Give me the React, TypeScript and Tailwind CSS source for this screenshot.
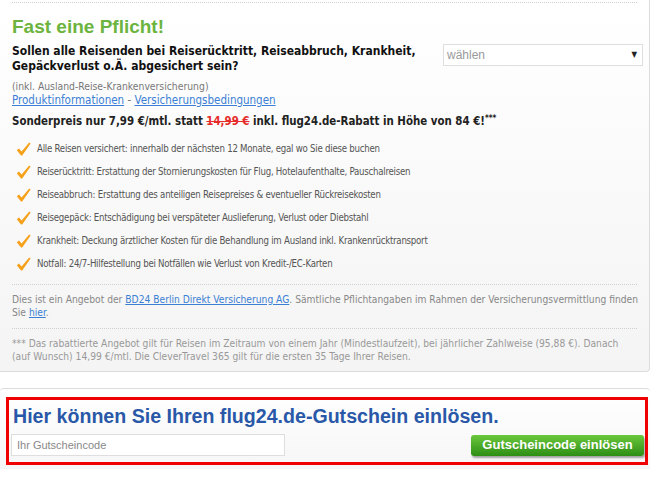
import React from "react";

const Check = () => (
  <svg width="15" height="14" viewBox="0 0 15 14" className="shrink-0">
    <path d="M0.8 8.2 L3 6.4 L5.6 9.4 L13.2 0.6 L14.6 1.6 L6.2 13.4 L5 13.4 Z" fill="#f6a11a" />
  </svg>
);

const items = [
  "Alle Reisen versichert: innerhalb der nächsten 12 Monate, egal wo Sie diese buchen",
  "Reiserücktritt: Erstattung der Stornierungskosten für Flug, Hotelaufenthalte, Pauschalreisen",
  "Reiseabbruch: Erstattung des anteiligen Reisepreises & eventueller Rückreisekosten",
  "Reisegepäck: Entschädigung bei verspäteter Auslieferung, Verlust oder Diebstahl",
  "Krankheit: Deckung ärztlicher Kosten für die Behandlung im Ausland inkl. Krankenrücktransport",
  "Notfall: 24/7-Hilfestellung bei Notfällen wie Verlust von Kredit-/EC-Karten",
];

export default function App() {
  return (
    <div className="w-[650px] h-[480px] bg-white overflow-hidden font-['DejaVu_Sans_Condensed','DejaVu_Sans',sans-serif]">
      {/* Insurance offer */}
      <div className="h-[372px] border-r border-b border-[#dcdcdc] rounded-br-[4px] bg-gradient-to-b from-white to-[#f4f4f4] px-3 pt-[2px]">
        <div className="border-t border-dotted border-[#cfcfcf]" />
        <h2 className="mt-[14px] text-[19px] leading-[20px] font-bold text-[#6cb43f] font-['Liberation_Sans',sans-serif]">
          Fast eine Pflicht!
        </h2>
        <div className="mt-[7px] flex justify-between">
          <p className="text-[12px] leading-[15px] font-bold text-[#111]">
            Sollen alle Reisenden bei Reiserücktritt, Reiseabbruch, Krankheit,
            <br />
            Gepäckverlust o.Ä. abgesichert sein?
          </p>
          <div className="w-[200px] h-[22px] border border-[#dedede] bg-white flex items-center justify-between px-[3px] mr-[-6px]">
            <span className="text-[12px] text-[#999] font-['Liberation_Sans',sans-serif]">wählen</span>
            <span className="text-[8px] text-[#222] mr-[2px]">▼</span>
          </div>
        </div>
        <p className="mt-[6px] text-[10.3px] leading-[13px] text-[#777]">(inkl. Ausland-Reise-Krankenversicherung)</p>
        <p className="text-[11.5px] leading-[14px] text-[#777]">
          <a href="#" className="text-[#3b7fd4] underline">Produktinformationen</a> -{" "}
          <a href="#" className="text-[#3b7fd4] underline">Versicherungsbedingungen</a>
        </p>
        <p className="mt-[7px] text-[11.4px] leading-[14px] font-bold text-[#222]">
          Sonderpreis nur 7,99 €/mtl. statt <span className="text-[#e62b2b] line-through">14,99 €</span> inkl. flug24.de-Rabatt in Höhe von 84 €!
          <sup className="text-[8px]">***</sup>
        </p>
        <ul className="mt-[14px] flex flex-col gap-[9px] pl-[4px]">
          {items.map((t) => (
            <li key={t} className="flex items-center gap-[6px] h-[14px] text-[9.6px] tracking-[-0.25px] text-[#555]">
              <Check />
              <span>{t}</span>
            </li>
          ))}
        </ul>
        <div className="mt-[13px] border-t border-dotted border-[#cfcfcf]" />
        <p className="mt-[8px] mr-[-4px] text-[10.2px] leading-[13px] text-[#888]">
          Dies ist ein Angebot der <a href="#" className="text-[#3b7fd4] underline">BD24 Berlin Direkt Versicherung AG</a>. Sämtliche Pflichtangaben im Rahmen der Versicherungsvermittlung finden Sie{" "}
          <a href="#" className="text-[#3b7fd4] underline">hier</a>.
        </p>
        <div className="mt-[9px] border-t border-dotted border-[#cfcfcf]" />
        <p className="mt-[8px] text-[10.2px] leading-[13px] text-[#999]">
          *** Das rabattierte Angebot gilt für Reisen im Zeitraum von einem Jahr (Mindestlaufzeit), bei jährlicher Zahlweise (95,88 €). Danach (auf Wunsch) 14,99 €/mtl. Die CleverTravel 365 gilt für die ersten 35 Tage Ihrer Reisen.
        </p>
      </div>

      {/* Voucher */}
      <div className="mt-[16px] border-t border-[#dcdcdc] rounded-t-[4px] bg-gradient-to-b from-white to-[#f6f6f6] pt-[8px] pb-[4px] pl-[6px] pr-[2px]">
        <div className="border-[3px] border-[#f00000] px-[2px] pt-[5px] pb-[6px]">
          <h2 className="pl-[2px] text-[19.6px] leading-[22px] font-bold text-[#2a58a8] font-['Liberation_Sans',sans-serif]">
            Hier können Sie Ihren flug24.de-Gutschein einlösen.
          </h2>
          <div className="mt-[7px] flex items-center justify-between">
            <input
              placeholder="Ihr Gutscheincode"
              className="w-[274px] h-[22px] border border-[#dedede] bg-white px-[5px] text-[11px] text-[#333] placeholder:text-[#888] font-['Liberation_Sans',sans-serif] outline-none"
            />
            <button className="h-[21px] w-[173px] rounded-[3px] bg-gradient-to-b from-[#6ac83c] to-[#2c8e13] text-white text-[13px] font-bold font-['Liberation_Sans',sans-serif] shadow-[1px_2px_2px_rgba(0,0,0,0.35)] mr-[-1px]">
              Gutscheincode einlösen
            </button>
          </div>
        </div>
      </div>
    </div>
  );
}
